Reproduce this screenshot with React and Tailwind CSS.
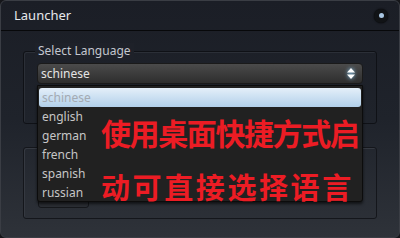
import React from "react";

const items = ["schinese", "english", "german", "french", "spanish", "russian"];

export default function App() {
  return (
    <div className="w-[400px] h-[238px] bg-[#15161a] overflow-hidden" style={{ fontFamily: '"Noto Sans", "Open Sans", sans-serif' }}>
      <div className="relative w-full h-full rounded-[6px] border border-[#3a3d44] bg-gradient-to-b from-[#1b1e26] via-[#1f232b] to-[#2e3239] flex flex-col">
        {/* title bar */}
        <div className="h-[30px] shrink-0 flex items-center justify-between pl-[13px] pr-[11px] border-b border-[#07080a]">
          <span className="text-[13px] text-[#e6e8ec] leading-none">Launcher</span>
          <div className="w-[14px] h-[14px] rounded-full bg-[#111316] shadow-[0_0_2px_#000] flex items-center justify-center">
            <div className="w-[5px] h-[5px] rounded-full bg-[#a9c6e2]" />
          </div>
        </div>

        {/* body */}
        <div className="flex flex-col px-[22px] pt-[20px] gap-[23px]">
          <div className="relative h-[73px] rounded-[3px] border border-[#0f1116] shadow-[inset_1px_1px_0_#2b2f37] px-[13px] pt-[11px]">
            <span className="absolute left-[11px] -top-[9px] px-[3px] bg-[#1e2129] text-[12px] leading-[16px] text-[#c3c7cf]">Select Language</span>
            <div className="h-[21px] rounded-[4px] bg-gradient-to-b from-[#4b4b4b] to-[#2e2e2e] border border-[#1a1a1a] flex items-center justify-between pl-[3px] pr-[6px]">
              <span className="text-[12px] text-[#e4e4e4] leading-none">schinese</span>
              <svg width="10" height="13" viewBox="0 0 10 13" style={{ filter: "drop-shadow(0 0 2px #8fd3ff)" }}>
                <path d="M5 1 L9 5.5 H1 Z" fill="#ffffff" />
                <path d="M5 12 L9 7.5 H1 Z" fill="#ffffff" />
              </svg>
            </div>
          </div>

          <div className="relative h-[72px] rounded-[3px] border border-[#14161b] shadow-[inset_1px_1px_0_#353941] px-[14px] flex items-end pb-[10px]">
            <div className="w-[51px] h-[20px] rounded-[3px] bg-[#2a2d33] border border-[#15171b] flex items-center justify-center">
              <div className="w-[8px] h-[6px] rounded-full bg-[#b8613c]" />
            </div>
          </div>
        </div>

        {/* dropdown overlay */}
        <div className="absolute left-[36px] top-[84px] w-[326px] h-[117px] bg-[#212121] border border-[#0c0c0c] rounded-b-[3px] shadow-[0_2px_3px_rgba(0,0,0,0.6)] flex flex-col px-px pt-[2px]">
          {items.map((it, i) => (
            <div
              key={it}
              className={
                i === 0
                  ? "h-[19px] shrink-0 rounded-[3px] bg-gradient-to-b from-[#e4eff9] to-[#b2d0ea] flex items-center pl-[3px] text-[12px] text-[#a3aab2]"
                  : "h-[19px] shrink-0 flex items-center pl-[3px] text-[12px] text-[#c6c6c6]"
              }
            >
              {it}
            </div>
          ))}
        </div>

        {/* red overlay text */}
        <div
          className="absolute left-[100px] top-[112px] flex flex-col text-[#ec1c24] font-bold"
          style={{ fontFamily: '"Noto Sans CJK SC", "Noto Sans", sans-serif' }}
        >
          <span className="text-[30px] leading-[38px] tracking-[-1.4px] whitespace-nowrap">使用桌面快捷方式启</span>
          <span className="mt-[16px] text-[29px] leading-[38px] tracking-[2.6px] whitespace-nowrap">动可直接选择语言</span>
        </div>
      </div>
    </div>
  );
}
